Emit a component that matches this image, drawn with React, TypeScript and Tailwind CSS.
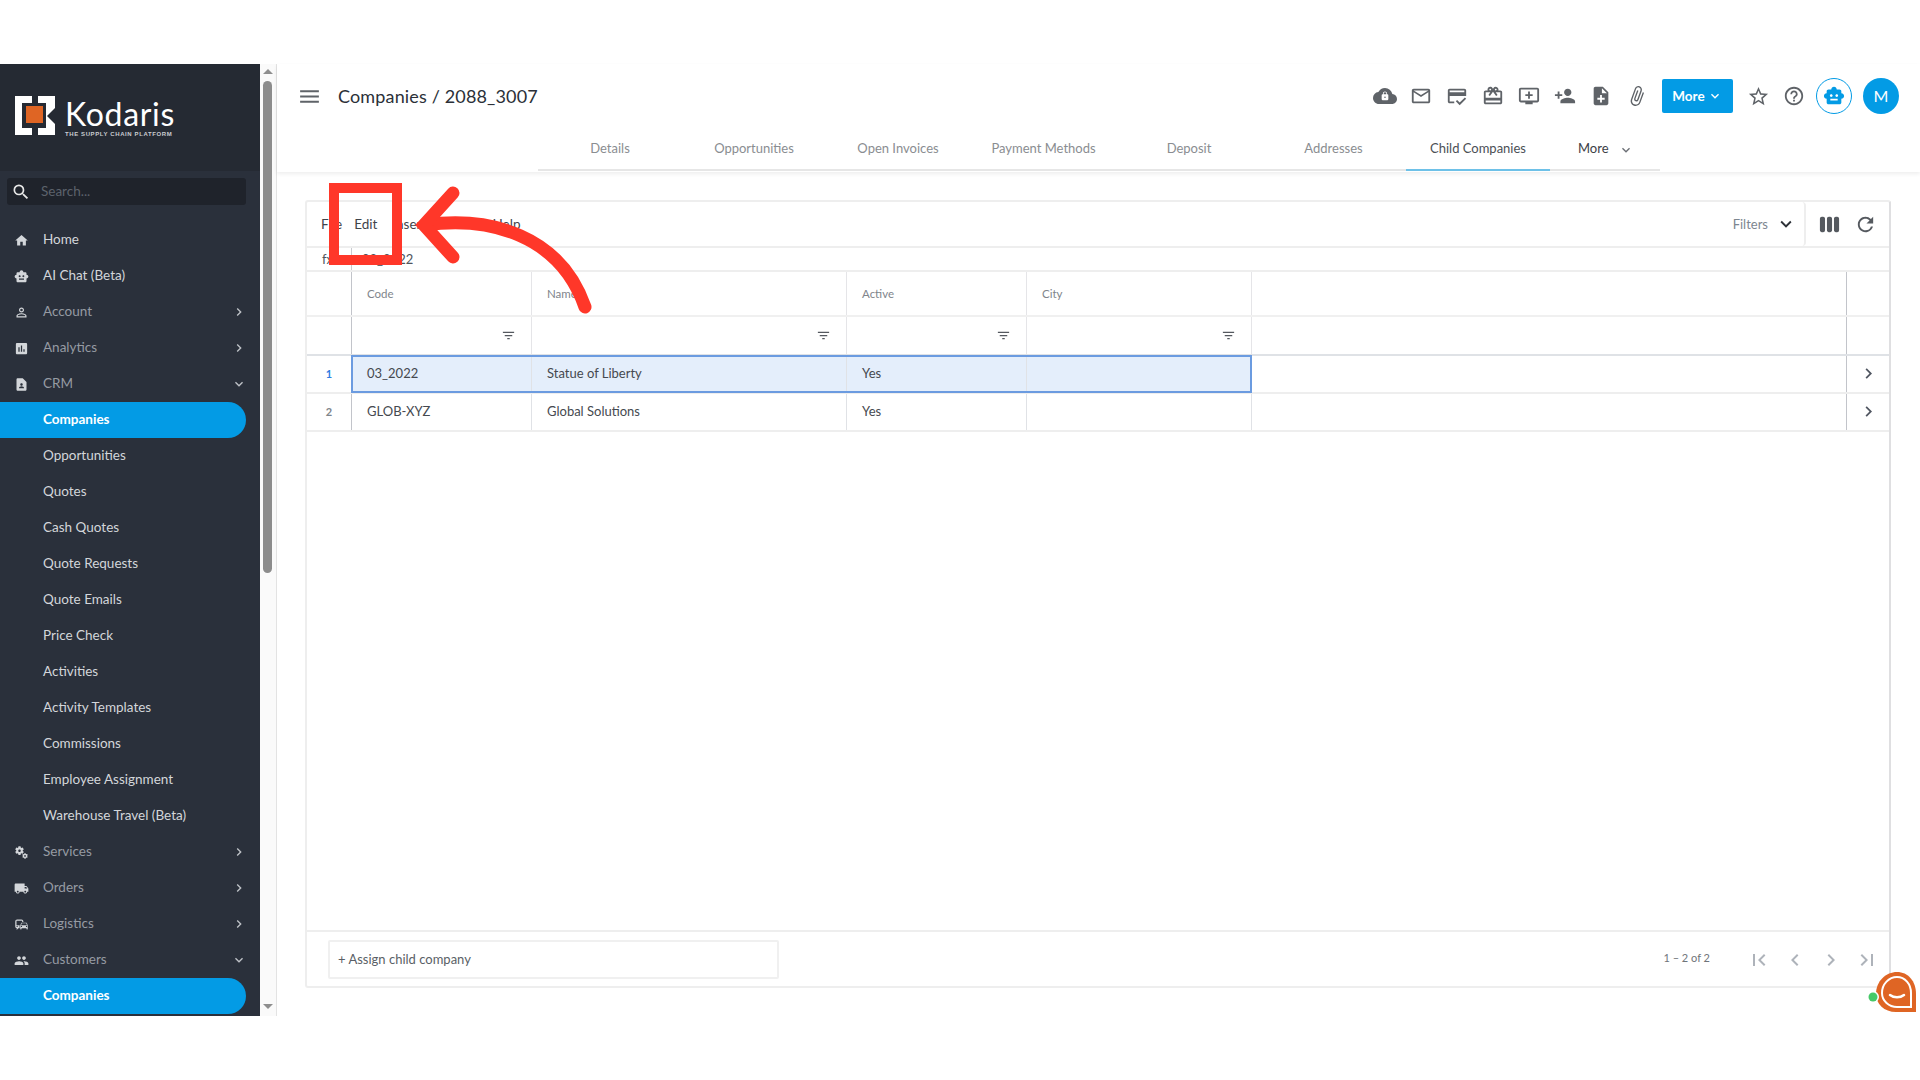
import {
  MdHome, MdSmartToy, MdOutlinePersonOutline, MdAssessment, MdContactPage, MdMiscellaneousServices,
  MdLocalShipping, MdCommute, MdPeople, MdChevronRight, MdExpandMore, MdSearch, MdMenu, MdCloud,
  MdLock, MdOutlineEmail, MdOutlineCreditScore, MdOutlineRedeem, MdOutlineAddToQueue, MdPersonAdd,
  MdNoteAdd, MdAttachFile, MdStarBorder, MdHelpOutline, MdFilterList, MdViewWeek, MdRefresh,
  MdFirstPage, MdLastPage,
} from 'react-icons/md';

const navItems = [
  { name: 'Home', icon: MdHome, tone: 'light' },
  { name: 'AI Chat (Beta)', icon: MdSmartToy, tone: 'light' },
  { name: 'Account', icon: MdOutlinePersonOutline, arrow: 'right' },
  { name: 'Analytics', icon: MdAssessment, arrow: 'right' },
  { name: 'CRM', icon: MdContactPage, arrow: 'down' },
  { name: 'Companies', active: true },
  { name: 'Opportunities' },
  { name: 'Quotes' },
  { name: 'Cash Quotes' },
  { name: 'Quote Requests' },
  { name: 'Quote Emails' },
  { name: 'Price Check' },
  { name: 'Activities' },
  { name: 'Activity Templates' },
  { name: 'Commissions' },
  { name: 'Employee Assignment' },
  { name: 'Warehouse Travel (Beta)' },
  { name: 'Services', icon: MdMiscellaneousServices, arrow: 'right' },
  { name: 'Orders', icon: MdLocalShipping, arrow: 'right' },
  { name: 'Logistics', icon: MdCommute, arrow: 'right' },
  { name: 'Customers', icon: MdPeople, arrow: 'down' },
  { name: 'Companies', active: true },
];

const tabs = [
  { name: 'Details', width: 'w-[144px]' },
  { name: 'Opportunities', width: 'w-[144px]' },
  { name: 'Open Invoices', width: 'w-[144px]' },
  { name: 'Payment Methods', width: 'w-[147px]' },
  { name: 'Deposit', width: 'w-[144px]' },
  { name: 'Addresses', width: 'w-[145px]' },
];

const rows = [
  { num: '1', code: '03_2022', name: 'Statue of Liberty', active: 'Yes', selected: true },
  { num: '2', code: 'GLOB-XYZ', name: 'Global Solutions', active: 'Yes', selected: false },
];

const gridCols = 'grid grid-cols-[45px_180px_315px_180px_225px_595px_45px]';

function Sidebar() {
  return (
    <aside className="w-[260px] h-full bg-[#2a303b] flex flex-col overflow-hidden shrink-0">
      <div className="h-[107px] shrink-0 bg-[#252a33] flex items-start pl-[15px] pt-[32px] gap-[10px]">
        <svg width="40" height="39" viewBox="0 0 40 39">
          <path d="M0 0H17V7H7V32H17V39H0Z" fill="#fff" />
          <path d="M23 0H40V12L32 20L40 28V39H23V32H31V7H23Z" fill="#fff" />
          <rect x="11" y="10" width="17" height="17" fill="#df6524" />
        </svg>
        <div className="flex flex-col text-white pt-[2px]">
          <span className="text-[32px] leading-[32px] font-['Lato',sans-serif] tracking-[0.7px]">Kodaris</span>
          <span className="text-[6px] leading-[6px] mt-[1px] font-bold tracking-[0.6px] text-[#c9ccd1] font-['Liberation_Sans',sans-serif]">
            THE SUPPLY CHAIN PLATFORM
          </span>
        </div>
      </div>
      <div className="h-[51px] shrink-0 pt-[7px] pl-[7px]">
        <div className="w-[239px] h-[27px] rounded-[3px] bg-[#1f232b] flex items-center pl-[4px] gap-[10px]">
          <MdSearch className="text-[#e8e8e8] text-[20px]" />
          <span className="text-[13.5px] text-[#5c626b]">Search...</span>
        </div>
      </div>
      {navItems.map((item, i) => {
        const Icon = item.icon;
        const light = item.tone === 'light' || !item.icon;
        return (
          <div
            key={i}
            className={`h-9 shrink-0 w-[246px] flex items-center relative text-[13.5px] ${
              item.active ? 'bg-[#039be5] rounded-r-full text-white font-bold' : light ? 'text-[#d3d6da]' : 'text-[#969ba3]'
            }`}
          >
            <span className="w-[43px] flex justify-center pr-[1px]">
              {Icon && <Icon className="text-[#d3d6da] text-[15px]" />}
            </span>
            <span className="pb-[1px]">{item.name}</span>
            {item.arrow === 'right' && <MdChevronRight className="absolute right-[-1px] text-[#bfc3c8] text-[16px]" />}
            {item.arrow === 'down' && <MdExpandMore className="absolute right-[-1px] text-[#bfc3c8] text-[16px]" />}
          </div>
        );
      })}
    </aside>
  );
}

function SideScrollbar() {
  return (
    <div className="w-[17px] h-full shrink-0 bg-[#fafafa] border-r border-[#e3e3e3] flex flex-col items-center pt-[5px] pr-[1px]">
      <div className="w-0 h-0 border-x-[5px] border-x-transparent border-b-[5px] border-b-[#8e8e8e]" />
      <div className="w-[9px] h-[492px] mt-[7px] rounded-full bg-[#8c8c8c]" />
      <div className="w-0 h-0 mt-[431px] border-x-[5px] border-x-transparent border-t-[5px] border-t-[#8e8e8e]" />
    </div>
  );
}

function TopBar() {
  const iconClass = 'text-[#5f6368] text-[22px]';
  return (
    <header className="h-[108px] shrink-0 bg-white shadow-[0_2px_4px_rgba(0,0,0,0.07)] flex flex-col">
      <div className="h-[64px] shrink-0 flex items-center pl-[20px] pr-[21px]">
        <MdMenu className="text-[#5f6368] text-[25px]" />
        <span className="ml-[16px] text-[18px] text-[#2b3038] tracking-[0.15px]">Companies / 2088_3007</span>
        <div className="ml-auto flex items-center">
          <span className="w-9 flex justify-center relative">
            <MdCloud className="text-[#5f6368] text-[24px]" />
            <MdLock className="absolute top-[7px] text-white text-[10px]" />
          </span>
          <span className="w-9 flex justify-center"><MdOutlineEmail className={iconClass} /></span>
          <span className="w-9 flex justify-center"><MdOutlineCreditScore className={iconClass} /></span>
          <span className="w-9 flex justify-center"><MdOutlineRedeem className={iconClass} /></span>
          <span className="w-9 flex justify-center"><MdOutlineAddToQueue className={iconClass} /></span>
          <span className="w-9 flex justify-center"><MdPersonAdd className={iconClass} /></span>
          <span className="w-9 flex justify-center"><MdNoteAdd className={iconClass} /></span>
          <span className="w-9 flex justify-center"><MdAttachFile className={`${iconClass} rotate-[20deg]`} /></span>
          <button className="ml-[7px] w-[71px] h-[34px] rounded-[2px] bg-[#039be5] text-white text-[13.5px] font-bold flex items-center justify-center">
            More
            <MdExpandMore className="ml-[2px] text-[16px]" />
          </button>
          <span className="ml-[7px] w-9 flex justify-center"><MdStarBorder className="text-[#5f6368] text-[23px]" /></span>
          <span className="w-9 flex justify-center"><MdHelpOutline className={iconClass} /></span>
          <span className="ml-[4px] w-9 h-9 rounded-full border border-[#039be5] flex items-center justify-center">
            <MdSmartToy className="text-[#039be5] text-[22px]" />
          </span>
          <span className="ml-[11px] w-9 h-9 rounded-full bg-[#039be5] text-white text-[16px] flex items-center justify-center">M</span>
        </div>
      </div>
      <div className="h-[43px] shrink-0 pl-[261px] flex">
        <div className="flex border-b-2 border-[#e6e6e6] h-[43px]">
          {tabs.map((t) => (
            <div key={t.name} className={`${t.width} flex items-center justify-center pt-[1px] text-[13px] text-[#8a8d91]`}>
              {t.name}
            </div>
          ))}
          <div className="w-[144px] -mb-[2px] flex items-center justify-center pt-[1px] text-[13px] text-[#4b4f55] border-b-2 border-[#6ec1e8]">
            Child Companies
          </div>
          <div className="w-[110px] flex items-center pl-[28px] pt-[1px] text-[13px] text-[#3c4046]">
            More
            <MdExpandMore className="ml-[9px] mt-[2px] text-[#6b6f75] text-[16px]" />
          </div>
        </div>
      </div>
    </header>
  );
}

function Annotation() {
  return (
    <>
      <div className="absolute left-[329px] top-[183px] w-[73px] h-[82px] border-[10px] border-[#ff3729]" />
      <svg className="absolute left-[400px] top-[180px]" width="210" height="140" viewBox="0 0 210 140" fill="none">
        <path d="M25 45C90 36 160 55 185 127" stroke="#ff3729" strokeWidth="13" strokeLinecap="round" />
        <path d="M53 13L24 45L53 77" stroke="#ff3729" strokeWidth="13" strokeLinecap="round" strokeLinejoin="miter" />
      </svg>
    </>
  );
}

function ChatWidget() {
  return (
    <div className="absolute left-[1868px] top-[970px]">
      <svg width="50" height="44" viewBox="0 0 50 44">
        <path d="M8 24C8 11 18 2 29 2C40 2 48 11 48 24V42H28C16 42 8 34 8 24Z" fill="#df6524" />
        <path d="M14 23C14 14 21 7 29 7C37 7 43 14 43 23V37H29C21 37 14 31 14 23Z" fill="none" stroke="#fff" strokeWidth="2" />
        <path d="M22 25C26 28 32 28 36 25" fill="none" stroke="#fff" strokeWidth="2.5" strokeLinecap="round" />
        <circle cx="5" cy="27" r="6" fill="#fff" />
        <circle cx="5" cy="27" r="4.5" fill="#46c968" />
      </svg>
    </div>
  );
}

function CompaniesTable() {
  return (
    <section className="mt-[28px] ml-[28px] w-[1586px] h-[788px] rounded-[3px] border-2 border-[#eeeeee] border-r-[#dfdfe1] flex flex-col bg-white">
      <div className="h-[46px] shrink-0 flex items-center border-b-2 border-[#eeeeee]">
        <div className="flex-1 h-full flex items-center text-[13.5px] text-[#3f444b] border-r-2 border-[#eeeeee] rounded-r-[4px]">
          <span className="ml-[14px]">File</span>
          <span className="ml-[12px]">Edit</span>
          <span className="ml-[15px]">Insert</span>
          <span className="ml-[12px]">Format</span>
          <span className="ml-[12px]">Help</span>
          <span className="ml-auto pt-[2px] text-[13px] text-[#7d8690]">Filters</span>
          <MdExpandMore className="ml-[7px] mr-[7px] text-[#2d3138] text-[22px]" />
        </div>
        <div className="w-[83px] flex items-center pl-[12px] pt-[1px] gap-[13px]">
          <MdViewWeek className="text-[#55595f] text-[23px]" />
          <MdRefresh className="text-[#55595f] text-[23px]" />
        </div>
      </div>
      <div className="h-[24px] shrink-0 flex items-center border-b-2 border-[#eeeeee] text-[13px] text-[#50555c]">
        <span className="w-[45px] pl-[15px] pt-[1px] border-r border-[#c9cbd0] h-full flex items-center">fx</span>
        <span className="pl-[10px] pt-[1px]">03_2022</span>
      </div>
      <div className={`${gridCols} h-[45px] shrink-0 border-b-2 border-[#f0f0f0] text-[11.5px] text-[#80858b]`}>
        <div className="border-r border-[#c2c4ca]" />
        <div className="pl-[15px] flex items-center border-r border-[#e5e5e8]">Code</div>
        <div className="pl-[15px] flex items-center border-r border-[#e5e5e8]">Name</div>
        <div className="pl-[15px] flex items-center border-r border-[#e5e5e8]">Active</div>
        <div className="pl-[15px] flex items-center border-r border-[#e5e5e8]">City</div>
        <div className="border-r border-[#c2c4ca]" />
        <div />
      </div>
      <div className={`${gridCols} h-[39px] shrink-0 border-b-2 border-[#dfe2e6]`}>
        <div className="border-r border-[#c2c4ca]" />
        {[0, 1, 2, 3].map((c) => (
          <div key={c} className="flex items-center justify-end pr-[15px] border-r border-[#e5e5e8]">
            <MdFilterList className="text-[#55595f] text-[15px]" />
          </div>
        ))}
        <div className="border-r border-[#c2c4ca]" />
        <div />
      </div>
      {rows.map((r) => (
        <div key={r.num} className={`${gridCols} h-[38px] shrink-0 border-b-2 border-[#eeeeee] text-[13px] text-[#45494f] relative`}>
          <div className={`flex items-center justify-center text-[11px] font-bold border-r border-[#c2c4ca] ${r.selected ? 'text-[#2f7de1]' : 'text-[#80858b]'}`}>
            {r.num}
          </div>
          <div className={`pl-[15px] flex items-center border-r border-[#e0e2e6] ${r.selected ? 'bg-[#e4eefb]' : ''}`}>{r.code}</div>
          <div className={`pl-[15px] flex items-center border-r border-[#e0e2e6] ${r.selected ? 'bg-[#e4eefb]' : ''}`}>{r.name}</div>
          <div className={`pl-[15px] flex items-center border-r border-[#e0e2e6] ${r.selected ? 'bg-[#e4eefb]' : ''}`}>{r.active}</div>
          <div className={`border-r border-[#e0e2e6] ${r.selected ? 'bg-[#e4eefb]' : ''}`} />
          <div className="border-r border-[#c2c4ca]" />
          <div className="flex items-center justify-center">
            <MdChevronRight className="text-[#4f5560] text-[21px] mb-[2px] mr-[2px]" />
          </div>
          {r.selected && (
            <div className="absolute left-[44px] top-[-1px] w-[901px] h-[38px] border-2 border-[#6b9be0] pointer-events-none" />
          )}
        </div>
      ))}
      <div className="flex-1" />
      <div className="h-[56px] shrink-0 border-t-2 border-[#eeeeee] flex items-center">
        <div className="ml-[21px] w-[451px] h-[39px] border-2 border-[#f0f0f0] rounded-[2px] flex items-center pl-[8px] pt-[2px] text-[13px] text-[#5a5f66]">
          + Assign child company
        </div>
        <span className="ml-auto text-[11px] text-[#6f747a] mb-[1px]">1 – 2 of 2</span>
        <div className="ml-[37px] mr-[10px] mt-[1px] flex items-center gap-[12px] text-[#aeb3ba] text-[24px]">
          <MdFirstPage />
          <MdChevronRight className="rotate-180" />
          <MdChevronRight />
          <MdLastPage />
        </div>
      </div>
    </section>
  );
}

export default function App() {
  return (
    <div className="w-[1920px] h-[1080px] bg-white relative overflow-hidden font-['Lato',sans-serif]">
      <div className="h-[64px]" />
      <div className="h-[952px] flex">
        <Sidebar />
        <SideScrollbar />
        <main className="flex-1 flex flex-col min-w-0">
          <TopBar />
          <CompaniesTable />
        </main>
      </div>
      <Annotation />
      <ChatWidget />
    </div>
  );
}
